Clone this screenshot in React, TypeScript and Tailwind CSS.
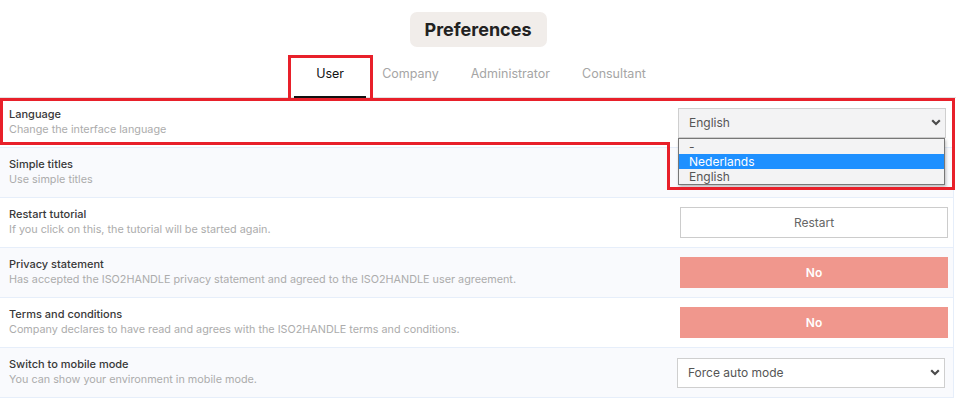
import React from "react";

type Row = {
  title: string;
  text: string;
  control: "language" | "restart" | "no" | "mobile" | "empty";
};

const rows: Row[] = [
  { title: "Language", text: "Change the interface language", control: "language" },
  { title: "Simple titles", text: "Use simple titles", control: "empty" },
  { title: "Restart tutorial", text: "If you click on this, the tutorial will be started again.", control: "restart" },
  {
    title: "Privacy statement",
    text: "Has accepted the ISO2HANDLE privacy statement and agreed to the ISO2HANDLE user agreement.",
    control: "no",
  },
  {
    title: "Terms and conditions",
    text: "Company declares to have read and agrees with the ISO2HANDLE terms and conditions.",
    control: "no",
  },
  { title: "Switch to mobile mode", text: "You can show your environment in mobile mode.", control: "mobile" },
];

function Chevron() {
  return (
    <svg width="10" height="7" viewBox="0 0 10 7" className="shrink-0">
      <path d="M1.2 1.3 L5 5 L8.8 1.3" fill="none" stroke="#4b4b4b" strokeWidth="2.2" />
    </svg>
  );
}

function Control({ kind }: { kind: Row["control"] }) {
  if (kind === "language") {
    return (
      <div className="relative mr-[7px] w-[268px]">
        <div className="flex h-[30px] items-center justify-between border border-[#cfcfcf] bg-[#f3f3f4] pl-[10px] pr-[4px] text-[12px] text-[#555]">
          <span>English</span>
          <Chevron />
        </div>
        <div className="absolute left-0 top-[30px] z-10 w-[267px] border border-[#777] bg-[#f3f3f4] text-[12px] leading-[15px] text-[#555] shadow-[1px_2px_3px_rgba(0,0,0,0.25)]">
          <div className="px-[10px]">-</div>
          <div className="bg-[#1e90ff] px-[10px] text-white">Nederlands</div>
          <div className="px-[10px]">English</div>
        </div>
      </div>
    );
  }
  if (kind === "restart") {
    return (
      <div className="mr-[5px] flex h-[31px] w-[268px] items-center justify-center border border-[#cccccc] bg-white text-[12px] text-[#666]">
        Restart
      </div>
    );
  }
  if (kind === "no") {
    return (
      <div className="mr-[5px] flex h-[31px] w-[268px] items-center justify-center bg-[#f0978d] text-[12px] font-semibold text-white">
        No
      </div>
    );
  }
  if (kind === "mobile") {
    return (
      <div className="mr-[8px] flex h-[30px] w-[268px] items-center justify-between border border-[#cfcfcf] bg-white pl-[10px] pr-[4px] text-[12px] text-[#555]">
        <span>Force auto mode</span>
        <Chevron />
      </div>
    );
  }
  return null;
}

function Annotations() {
  return (
    <svg className="pointer-events-none absolute left-0 top-0 z-20" width="956" height="398">
      <path d="M289.5 99.5 V56.5 H371.5 V99.5" fill="none" stroke="#e8202a" strokeWidth="3" />
      <path
        d="M1.5 99.5 H953.5 V188.5 H668.5 V143.5 H1.5 Z"
        fill="none"
        stroke="#e8202a"
        strokeWidth="3"
      />
    </svg>
  );
}

export default function App() {
  const tabs = ["User", "Company", "Administrator", "Consultant"];
  return (
    <div className="relative h-[398px] w-[956px] overflow-hidden bg-white font-['Inter',sans-serif]">
      <div className="flex justify-center pt-[12px]">
        <div className="flex h-[35px] items-center rounded-[7px] bg-[#f1edea] px-[15px] text-[18px] font-bold text-[#222]">
          Preferences
        </div>
      </div>

      <div className="mt-[8px] flex h-[43px] justify-center border-b border-[#e2e2e2]">
        {tabs.map((t, i) => (
          <div
            key={t}
            className={
              i === 0
                ? "-mb-px flex w-[72px] justify-center border-b-2 border-[#111] pt-[10px] text-[12.5px] text-[#111]"
                : "flex justify-center px-4 pt-[10px] text-[12.5px] text-[#a5a5a5]"
            }
          >
            {t}
          </div>
        ))}
      </div>

      <div className="w-[954px] border-r border-[#e6eefa]">
        {rows.map((r, i) => (
          <div
            key={r.title}
            className={
              "flex h-[50px] items-center justify-between border-b border-[#e6eefa] pl-[9px] " +
              (i % 2 === 1 ? "bg-[#f9fafd]" : "bg-white")
            }
          >
            <div className="flex flex-col pb-[2px]">
              <span className="text-[11px] font-medium leading-[16px] text-[#383838]">{r.title}</span>
              <span className="text-[10.8px] leading-[16px] text-[#acacac]">{r.text}</span>
            </div>
            <Control kind={r.control} />
          </div>
        ))}
      </div>

      <Annotations />
    </div>
  );
}
